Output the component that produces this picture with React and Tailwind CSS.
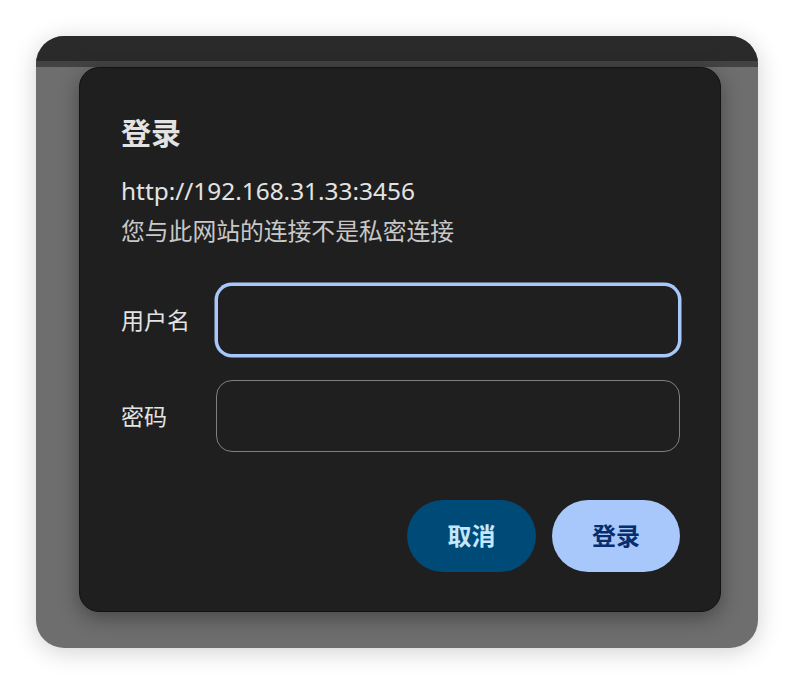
export default function App() {
  const font = { fontFamily: '"Noto Sans", "Noto Sans CJK SC", sans-serif' };
  return (
    <div className="w-[794px] h-[684px] bg-white pt-[36px] pl-[36px]" style={font}>
      <div className="w-[722px] h-[612px] rounded-[28px] overflow-hidden bg-[#6e6e6e] flex flex-col shadow-[0_4px_24px_rgba(0,0,0,0.18)]">
        <div className="h-[25px] bg-[#2a2a2a] shrink-0" />
        <div className="h-[6px] bg-[#434343] shrink-0" />
        <div className="flex-1 pl-[43px]">
          <div className="w-[642px] h-[545px] rounded-[20px] bg-[#1f1f1f] border border-[#121212] shadow-[0_6px_20px_rgba(0,0,0,0.35)] pt-[47px] pl-[41px] pr-[40px] pb-[39px] flex flex-col">
            <div className="h-[36px] leading-[36px] text-[30px] font-bold text-[#e3e3e3]">登录</div>
            <div className="mt-[20px] leading-[40px] text-[24.4px] text-[#e3e3e3]">http://192.168.31.33:3456</div>
            <div className="leading-[40px] text-[23.8px] text-[#c8c8c8]">您与此网站的连接不是私密连接</div>
            <div className="mt-[33px] flex items-center">
              <div className="w-[95px] text-[23px] text-[#e3e3e3]">用户名</div>
              <div className="w-[464px] h-[72px] rounded-[16px] border-[2px] border-[#a8c7fa] ring-[1.5px] ring-[#a8c7fa] bg-[#1f1f1f]" />
            </div>
            <div className="mt-[24px] flex items-center">
              <div className="w-[95px] text-[23px] text-[#e3e3e3]">密码</div>
              <div className="w-[464px] h-[72px] rounded-[16px] border-[1.5px] border-[#7f7f7f] bg-[#1f1f1f]" />
            </div>
            <div className="mt-[48px] flex justify-end gap-[16px]">
              <button className="w-[129px] h-[72px] rounded-full bg-[#004a77] text-[#c2e7ff] text-[24px] font-bold">取消</button>
              <button className="w-[128px] h-[72px] rounded-full bg-[#a8c7fa] text-[#062e6f] text-[24px] font-bold">登录</button>
            </div>
          </div>
        </div>
      </div>
    </div>
  );
}
